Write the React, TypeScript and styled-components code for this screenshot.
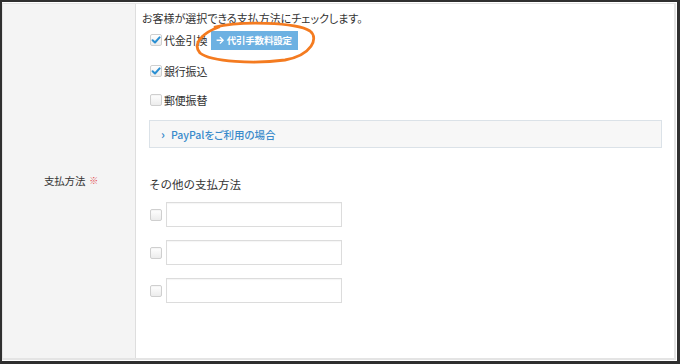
import React from 'react';
import styled, { createGlobalStyle } from 'styled-components';
import { FaArrowRight } from 'react-icons/fa';

const GlobalStyle = createGlobalStyle`
  html, body {
    margin: 0;
    padding: 0;
    background: #fff;
  }
  body {
    font-family: "Noto Sans CJK JP", "Noto Sans", sans-serif;
    color: #333;
  }
  * {
    box-sizing: border-box;
  }
`;

const Frame = styled.div({
  position: 'relative',
  width: '680px',
  height: '364px',
  border: '2px solid #2f2f2f',
  borderRightWidth: '3px',
  borderBottomWidth: '3px',
  padding: '1px 1px 1px 0',
  background: '#fff'
});

const Table = styled.div({
  display: 'grid',
  gridTemplateColumns: '133px 1fr',
  height: '100%',
  border: '1px solid #e4e4e4',
  borderRightWidth: '2px',
  borderBottomWidth: '2px'
});

const LabelCell = styled.div({
  display: 'flex',
  alignItems: 'center',
  justifyContent: 'center',
  background: '#f4f4f4',
  borderRight: '1px solid #dedede',
  fontSize: '10.5px',
  letterSpacing: '-0.2px',
  paddingBottom: '2px',
  paddingLeft: '4px'
});

const Required = styled.span({
  color: '#e2474d',
  fontSize: '9px',
  marginLeft: '4px'
});

const FieldCell = styled.div({
  display: 'flex',
  flexDirection: 'column',
  padding: '6px 12px 0 6px',
  fontSize: '11px',
  fontFeatureSettings: '"palt"'
});

const Note = styled.p({
  margin: 0,
  lineHeight: '16px'
});

const Options = styled.div({
  display: 'flex',
  flexDirection: 'column',
  marginLeft: '7px'
});

const CheckList = styled.div({
  display: 'flex',
  flexDirection: 'column',
  gap: '9px',
  margin: '4px 0 0 1px'
});

const CheckRow = styled.label<{ $tall?: boolean }>((props) => ({
  display: 'flex',
  alignItems: 'center',
  gap: '2px',
  height: props.$tall ? '22px' : '20px',
  paddingBottom: props.$tall ? '2px' : '0',
  lineHeight: '20px',
  letterSpacing: '-0.2px'
}));

const Box = styled.span<{ $checked?: boolean }>((props) => ({
  display: 'inline-flex',
  alignItems: 'center',
  justifyContent: 'center',
  flex: '0 0 auto',
  width: '12px',
  height: '12px',
  border: '1px solid #cfcfcf',
  borderRadius: '2px',
  background: 'linear-gradient(#ffffff, #ececec)',
  boxShadow: props.$checked ? 'none' : 'inset 0 1px 1px rgba(0,0,0,0.04)'
}));

const FeeButton = styled.span({
  display: 'inline-flex',
  alignItems: 'center',
  gap: '2px',
  height: '19px',
  marginLeft: '2px',
  padding: '0 6px 0 5px',
  background: '#6db1e2',
  color: '#fff',
  fontSize: '9.5px',
  fontWeight: 'bold',
  letterSpacing: '-0.2px'
});

const PaypalBox = styled.div({
  display: 'flex',
  alignItems: 'center',
  height: '28px',
  marginTop: '10px',
  padding: '0 0 0 11px',
  background: '#f7f7f7',
  border: '1px solid #dbe2e8',
  color: '#3a8bcb',
  fontSize: '10.5px',
  fontWeight: 500
});

const Chevron = styled.span({
  fontSize: '12px',
  fontWeight: 'bold',
  marginRight: '6px',
  lineHeight: 1
});

const SubTitle = styled.p({
  margin: '28px 0 0 0',
  lineHeight: '16px',
  fontSize: '11.5px',
  fontFeatureSettings: 'normal'
});

const OtherList = styled.div({
  display: 'flex',
  flexDirection: 'column',
  gap: '13px',
  marginTop: '10px'
});

const OtherRow = styled.div({
  display: 'flex',
  alignItems: 'center',
  gap: '4px',
  paddingLeft: '1px'
});

const TextInput = styled.input({
  width: '176px',
  height: '25px',
  border: '1px solid #dcdcdc',
  boxShadow: 'inset 0 1px 1px rgba(0,0,0,0.04)',
  outline: 'none',
  background: '#fff',
  padding: '0 4px'
});

const Highlight = styled.svg({
  position: 'absolute',
  left: '192px',
  top: '20px',
  overflow: 'visible',
  pointerEvents: 'none'
});

function Check({ checked }: { checked?: boolean }) {
  return (
    <Box $checked={checked}>
      {checked && (
        <svg width="10" height="10" viewBox="0 0 10 10">
          <path d="M1.6 5.2 L4 7.5 L8.6 2.4" fill="none" stroke="#2a8fd2" strokeWidth="2" strokeLinecap="round" strokeLinejoin="round" />
        </svg>
      )}
    </Box>
  );
}

export default function App() {
  return (
    <>
      <GlobalStyle />
      <Frame>
        <Table>
          <LabelCell>
            支払方法<Required>※</Required>
          </LabelCell>
          <FieldCell>
            <Note>お客様が選択できる支払方法にチェックします。</Note>
            <Options>
              <CheckList>
                <CheckRow $tall>
                  <Check checked />
                  代金引換
                  <FeeButton>
                    <FaArrowRight size={8.5} />
                    代引手数料設定
                  </FeeButton>
                </CheckRow>
                <CheckRow>
                  <Check checked />
                  銀行振込
                </CheckRow>
                <CheckRow>
                  <Check />
                  郵便振替
                </CheckRow>
              </CheckList>
              <PaypalBox>
                <Chevron>›</Chevron>
                PayPalをご利用の場合
              </PaypalBox>
              <SubTitle>その他の支払方法</SubTitle>
              <OtherList>
                {[0, 1, 2].map((i) => (
                  <OtherRow key={i}>
                    <Check />
                    <TextInput type="text" />
                  </OtherRow>
                ))}
              </OtherList>
            </Options>
          </FieldCell>
        </Table>
        <Highlight width="122" height="42" viewBox="0 0 122 42">
          <path
            d="M21 5 C 46 -1, 102 0, 116 9 C 125 16, 118 33, 91 38 C 61 42, 17 40, 6 31 C -2 22, 8 11, 25 5"
            fill="none"
            stroke="#f47b20"
            strokeWidth="2.8"
            strokeLinecap="round"
          />
        </Highlight>
      </Frame>
    </>
  );
}
